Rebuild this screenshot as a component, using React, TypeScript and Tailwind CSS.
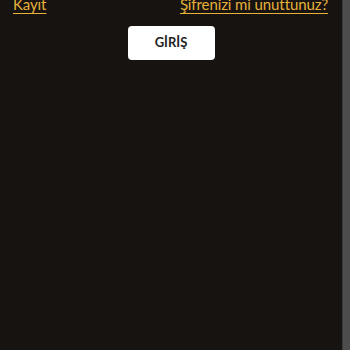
import React from "react";

export default function App() {
  return (
    <div className="flex h-[350px] w-[350px] overflow-hidden bg-[#161311] font-['Lato',sans-serif]">
      <div className="flex-1">
        {/* Links row, page is scrolled so the top is cut */}
        <div className="-mt-[6px] flex items-center justify-between pl-[13px] pr-[14px]">
          <a href="#" className="text-[15px] leading-[20px] tracking-[-0.1px] text-[#e8b13a] underline underline-offset-[3px]">
            Kayıt
          </a>
          <a href="#" className="text-[15px] leading-[20px] tracking-[-0.1px] text-[#e8b13a] underline underline-offset-[3px]">
            Şifrenizi mi unuttunuz?
          </a>
        </div>

        {/* Submit */}
        <div className="mt-[12px] flex justify-center">
          <button className="h-[34px] w-[87px] rounded-[4px] bg-white text-[13px] font-bold text-[#222]">
            GİRİŞ
          </button>
        </div>
      </div>

      {/* Scrollbar strip */}
      <div className="w-[8px] border-l border-[#3a3a3a] bg-[#4d4d4d]" />
    </div>
  );
}
